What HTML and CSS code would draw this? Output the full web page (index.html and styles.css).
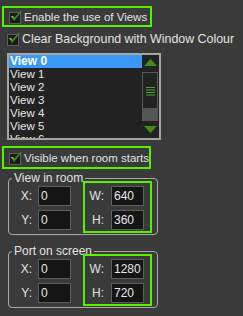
FILE: index.html
```html
<!DOCTYPE html>
<html lang="en">
<head>
    <meta charset="UTF-8">
    <title>Views</title>
    <link rel="stylesheet" href="styles.css">
</head>
<body>
    <div class="panel">
        <label class="check hl first">
            <svg class="box" width="14" height="14" viewBox="0 0 14 14"><rect x="0.5" y="2.5" width="11" height="11" fill="#1b1b1b" stroke="#5c5c5c"/><path d="M2 6 L5 11 L13 1 L11.5 1 L5 8 L4 6 Z" fill="#3f8f1c"/><path d="M2 6 L4 6 L5 8 L3.5 8 Z" fill="#7cc84a"/></svg>
            <span>Enable the use of Views</span>
        </label>
        <label class="check second">
            <svg class="box" width="14" height="14" viewBox="0 0 14 14"><rect x="0.5" y="2.5" width="11" height="11" fill="#1b1b1b" stroke="#5c5c5c"/><path d="M2 6 L5 11 L13 1 L11.5 1 L5 8 L4 6 Z" fill="#3f8f1c"/><path d="M2 6 L4 6 L5 8 L3.5 8 Z" fill="#7cc84a"/></svg>
            <span>Clear Background with Window Colour</span>
        </label>

        <div class="listbox">
            <ul class="items">
                <li class="selected">View 0</li>
                <li>View 1</li>
                <li>View 2</li>
                <li>View 3</li>
                <li>View 4</li>
                <li>View 5</li>
                <li>View 6</li>
            </ul>
            <div class="scrollbar">
                <div class="arrow"><svg width="13" height="8" viewBox="0 0 13 8"><path d="M6.5 0 L13 7 L0 7 Z" fill="#3f8f1c"/></svg></div>
                <div class="thumb">
                    <svg width="9" height="10" viewBox="0 0 9 10"><path d="M0 1.5h9M0 4h9M0 6.5h9M0 9h9" stroke="#4aa61e" stroke-width="1.2"/></svg>
                </div>
                <div class="track"></div>
                <div class="arrow"><svg width="13" height="8" viewBox="0 0 13 8"><path d="M0 0 L13 0 L6.5 7 Z" fill="#3f8f1c"/></svg></div>
            </div>
        </div>

        <label class="check hl third">
            <svg class="box" width="14" height="14" viewBox="0 0 14 14"><rect x="0.5" y="2.5" width="11" height="11" fill="#1b1b1b" stroke="#5c5c5c"/><path d="M2 6 L5 11 L13 1 L11.5 1 L5 8 L4 6 Z" fill="#3f8f1c"/><path d="M2 6 L4 6 L5 8 L3.5 8 Z" fill="#7cc84a"/></svg>
            <span>Visible when room starts</span>
        </label>

        <fieldset class="group">
            <legend>View in room</legend>
            <div class="coords">
                <div class="pos">
                    <div class="field"><span class="lbl">X:</span><input type="text" value="0"></div>
                    <div class="field"><span class="lbl">Y:</span><input type="text" value="0"></div>
                </div>
                <div class="size">
                    <div class="field"><span class="lbl">W:</span><input type="text" value="640"></div>
                    <div class="field"><span class="lbl">H:</span><input type="text" value="360"></div>
                </div>
            </div>
        </fieldset>

        <fieldset class="group port">
            <legend>Port on screen</legend>
            <div class="coords">
                <div class="pos">
                    <div class="field"><span class="lbl">X:</span><input type="text" value="0"></div>
                    <div class="field"><span class="lbl">Y:</span><input type="text" value="0"></div>
                </div>
                <div class="size">
                    <div class="field"><span class="lbl">W:</span><input type="text" value="1280"></div>
                    <div class="field"><span class="lbl">H:</span><input type="text" value="720"></div>
                </div>
            </div>
        </fieldset>
    </div>
</body>
</html>
```

FILE: styles.css
```css
body {
    margin: 0;
    background: #3a3a3a;
    color: #e2e2e2;
    font-family: 'Liberation Sans', Arial, sans-serif;
    font-size: 12px;
}

.panel {
    padding: 6px 0 0 2px;
}

.check {
    display: flex;
    align-items: center;
    box-sizing: border-box;
    padding-left: 5px;
    height: 21px;
    white-space: nowrap;
}

.check .box {
    margin-right: 1px;
    flex: none;
}

.hl {
    border: 2px solid #55f000;
    font-size: 11.5px;
}

.first {
    width: 150px;
}

.second {
    margin-top: 2px;
    padding-left: 5px;
    height: 20px;
    font-size: 12.4px;
}

.third {
    width: 149px;
    height: 23px;
    margin-top: 6px;
}

.listbox {
    display: flex;
    margin: 4px 0 0 5px;
    width: 154px;
    height: 87px;
    box-sizing: border-box;
    border: 2px solid #a6a69e;
    background: #222;
    overflow: hidden;
}

.items {
    list-style: none;
    margin: 0;
    padding: 0;
    flex: 1;
    font-size: 11.5px;
    color: #e6e6e6;
}

.items li {
    height: 13px;
    line-height: 13px;
    padding-left: 1px;
}

.items .selected {
    background: #3a99f8;
    color: #fff;
    font-weight: bold;
    font-size: 12px;
}

.scrollbar {
    width: 17px;
    display: flex;
    flex-direction: column;
    background: #222;
}

.arrow {
    height: 17px;
    display: flex;
    align-items: center;
    justify-content: center;
}

.thumb {
    height: 37px;
    box-sizing: border-box;
    border: 1px solid #5a5a5a;
    border-bottom: none;
    margin-right: 1px;
    display: flex;
    align-items: center;
    justify-content: center;
}

.track {
    height: 13px;
    background: #565656;
    margin-right: 1px;
}

.group {
    margin: 3px 0 0 6px;
    padding: 0 0 1px 0;
    width: 150px;
    box-sizing: border-box;
    border: 1px solid #aaa99a;
    border-radius: 4px;
}

.group legend {
    padding: 0 2px;
    margin-left: 3px;
    line-height: 12px;
}

.port {
    margin-top: 10px;
}

.coords {
    display: flex;
    align-items: flex-start;
    margin-top: -3px;
}

.pos {
    margin-top: 5px;
    margin-right: 12px;
}

.size {
    border: 2px solid #55f000;
    padding: 3px 6px 1px 0;
}

.field {
    display: flex;
    align-items: center;
}

.field + .field {
    margin-top: 4px;
}

.lbl {
    width: 23px;
    text-align: right;
    margin-right: 6px;
}

.size .lbl {
    width: 19px;
    margin-right: 7px;
}

input {
    width: 33px;
    height: 20px;
    box-sizing: border-box;
    padding: 0 2px;
    border: 1px solid #5e5e5e;
    background: #151515;
    color: #e8e8e8;
    font-family: 'Liberation Sans', Arial, sans-serif;
    font-size: 12px;
}
```
